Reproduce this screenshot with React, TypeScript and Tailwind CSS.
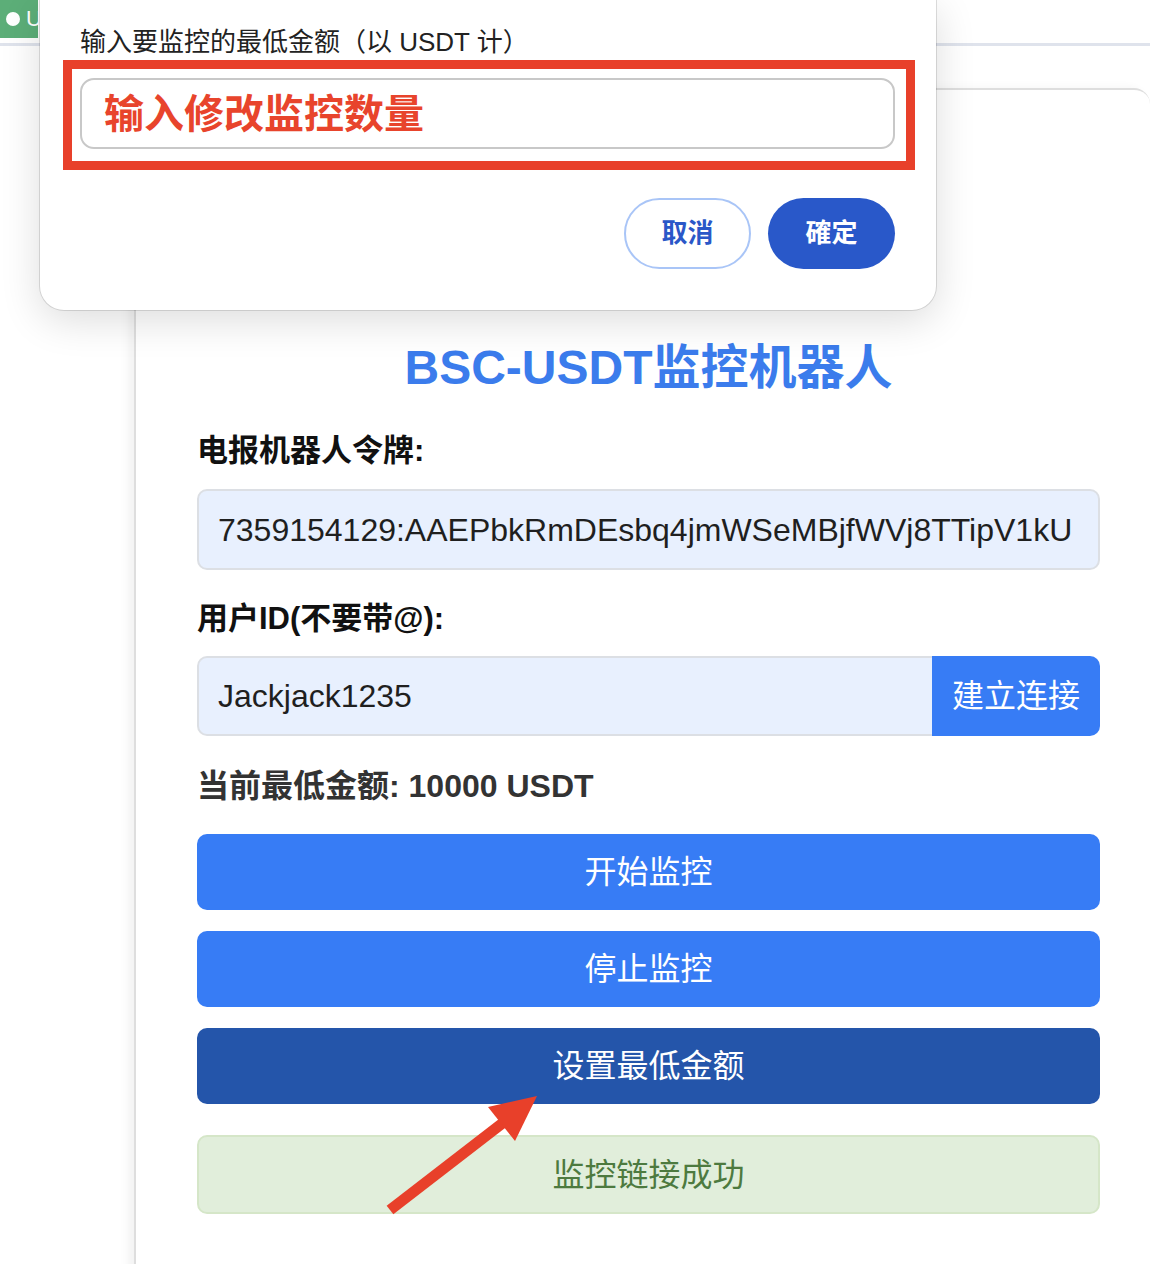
import React from 'react';

const FONT = { fontFamily: '"Liberation Sans", "Noto Sans CJK SC", sans-serif' };

const ACTIONS = [
    { id: 1, label: '开始监控', tone: 'bg-[#377cf5]' },
    { id: 2, label: '停止监控', tone: 'bg-[#377cf5]' },
    { id: 3, label: '设置最低金额', tone: 'bg-[#2455aa]' },
];

export default function App() {
    return (
        <div className="relative w-[1150px] h-[1264px] overflow-hidden bg-white" style={FONT}>
            {/* Top bar behind the dialog */}
            <div className="h-[46px] border-b-[3px] border-[#dfe3ec] flex items-start">
                <div className="w-[38px] h-[38px] bg-[#5cae78] flex items-center pl-[6px] gap-[6px] overflow-hidden">
                    <div className="w-[14px] h-[14px] rounded-full bg-white shrink-0"></div>
                    <span className="text-white text-[22px] leading-none">U</span>
                </div>
            </div>

            {/* Main card */}
            <div className="ml-[134px] mt-[42px] border-l-2 border-t-2 border-[#dedede] rounded-tr-[16px] pl-[61px] pr-[50px] pt-[250px] pb-[120px] shadow-[-6px_0_10px_rgba(0,0,0,0.05)]">
                <h1 className="text-center text-[48px] leading-[55px] font-bold text-[#3b7cec]">BSC-USDT监控机器人</h1>

                <div className="mt-[38px] text-[31px] leading-[36px] font-bold text-[#111]">电报机器人令牌:</div>
                <div className="mt-[20px] h-[81px] rounded-[10px] border-2 border-[#dcdfe4] bg-[#e8f0fe] flex items-center pl-[19px] overflow-hidden">
                    <span className="text-[32px] text-[#1f1f1f] whitespace-nowrap">7359154129:AAEPbkRmDEsbq4jmWSeMBjfWVj8TTipV1kU</span>
                </div>

                <div className="mt-[31px] text-[31px] leading-[36px] font-bold text-[#111]">用户ID(不要带@):</div>
                <div className="mt-[19px] h-[80px] flex">
                    <div className="flex-1 rounded-l-[10px] border-2 border-r-0 border-[#dcdfe4] bg-[#e8f0fe] flex items-center pl-[19px]">
                        <span className="text-[32px] text-[#1f1f1f]">Jackjack1235</span>
                    </div>
                    <div className="w-[168px] rounded-r-[10px] bg-[#377cf5] flex items-center justify-center text-white text-[32px]">建立连接</div>
                </div>

                <div className="mt-[32px] text-[32px] leading-[36px] font-bold text-[#333]">当前最低金额: 10000 USDT</div>

                <div className="mt-[30px] flex flex-col gap-[21px]">
                    {ACTIONS.map((a) => (
                        <div key={a.id} className={`${a.tone} h-[76px] rounded-[10px] flex items-center justify-center text-white text-[32px]`}>
                            {a.label}
                        </div>
                    ))}
                </div>

                <div className="mt-[31px] h-[79px] rounded-[10px] border-2 border-[#d5e6c8] bg-[#e1eedb] flex items-center justify-center text-[32px] text-[#4d7a3f]">
                    监控链接成功
                </div>
            </div>

            {/* Dialog overlay */}
            <div className="absolute left-[40px] top-0 w-[896px] bg-white rounded-b-[24px] pt-[27px] pl-[40px] pr-[41px] pb-[41px] shadow-[0_0_0_1px_rgba(0,0,0,0.12),0_10px_40px_rgba(0,0,0,0.14)]">
                <div className="text-[26px] leading-[30px] text-[#222]">输入要监控的最低金额（以 USDT 计）</div>
                <div className="relative mt-[21px]">
                    <div className="h-[71px] rounded-[14px] border-2 border-[#c8c8c8] flex items-center pl-[22px]">
                        <span className="text-[40px] font-bold text-[#e8442c] leading-none">输入修改监控数量</span>
                    </div>
                    {/* red annotation box */}
                    <div className="absolute left-[-17px] top-[-18px] w-[852px] h-[110px] border-[9px] border-[#e8402a]"></div>
                </div>
                <div className="mt-[49px] flex justify-end gap-[17px]">
                    <div className="w-[127px] h-[71px] rounded-full border-2 border-[#a9c5f7] flex items-center justify-center text-[26px] font-bold text-[#2a57c8]">取消</div>
                    <div className="w-[127px] h-[71px] rounded-full bg-[#2958c9] flex items-center justify-center text-[26px] font-bold text-white">確定</div>
                </div>
            </div>

            {/* Red arrow annotation */}
            <svg className="absolute left-0 top-0 pointer-events-none" width="1150" height="1264">
                <line x1="390" y1="1210" x2="504" y2="1122" stroke="#e8402a" strokeWidth="11" />
                <polygon points="537,1096 515,1141 488,1107" fill="#e8402a" />
            </svg>
        </div>
    );
}
